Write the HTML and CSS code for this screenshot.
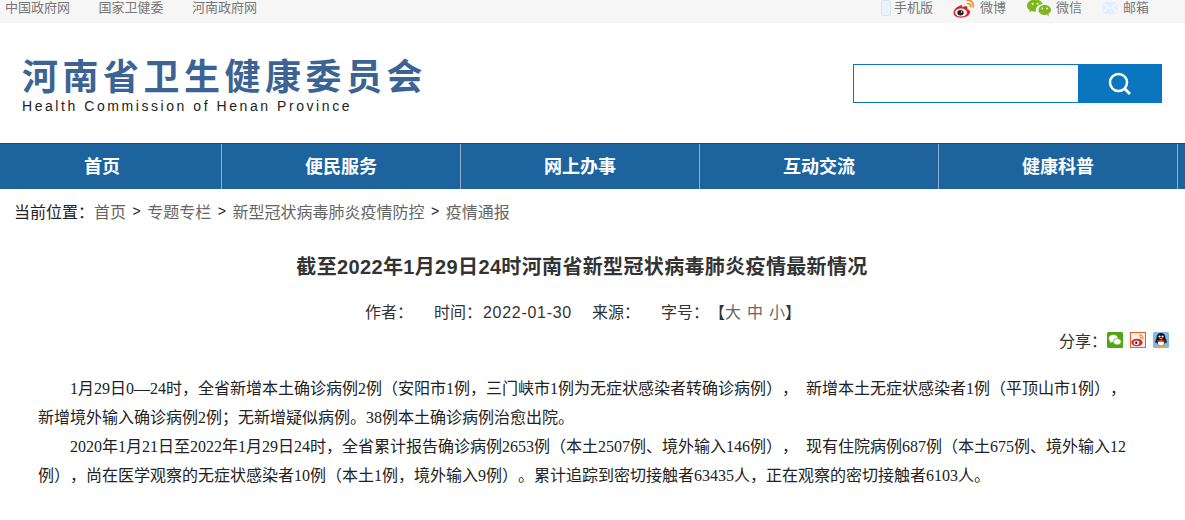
FILE: index.html
```html
<!DOCTYPE html>
<html>
<head>
    <meta charset="utf-8">
    <link rel="stylesheet" href="styles.css">
</head>
<body>
    <div class="top-bar">
        <div class="top-links">
            <a>中国政府网</a>
            <a>国家卫健委</a>
            <a>河南政府网</a>
        </div>
        <div class="top-tools">
            <a class="tool tool-phone">
                <svg width="10" height="16" viewBox="0 0 10 16"><rect x="0.5" y="0.5" width="9" height="15" rx="1.5" fill="#eaf3fc" stroke="#d5e6f7"/></svg>
                手机版
            </a>
            <a class="tool tool-weibo">
                <svg width="22" height="19" viewBox="0 0 22 19">
                    <path d="M9 6C4.500 7 .2 10.500 .5 14c.3 3.200 4.200 5 8.700 4.600 4.800-.4 8.300-3.200 7.900-6-.2-1.400-1.600-2.100-2.900-2.400.7-1.700.3-2.800-1-3-1.300-.2-3 .3-4 1.100.2-1.600-.2-2.700-1.200-2.300z" fill="#d9232a"/>
                    <ellipse cx="8" cy="13.500" rx="6" ry="4" fill="#fff"/>
                    <ellipse cx="7.500" cy="13.800" rx="3.200" ry="2.700" fill="#222"/>
                    <circle cx="8.500" cy="13" r=".8" fill="#fff"/>
                    <path d="M14 1.200c3.700-.6 7.100 2.500 6 6.800M14.500 4.500c1.900-.3 3.500 1.200 3 3.100" fill="none" stroke="#f08a1d" stroke-width="1.600" stroke-linecap="round"/>
                </svg>
                微博
            </a>
            <a class="tool tool-wechat">
                <svg width="24" height="18" viewBox="0 0 25 18">
                    <path d="M8.500 0C3.800 0 0 2.900 0 6.400c0 2 1.200 3.700 3 4.900L2.400 13.500l2.500-1.300c1.100.4 2.300.6 3.600.6.400 0 .7 0 1-.1-.2-.6-.3-1.200-.3-1.800 0-3.300 3.200-5.900 7.100-5.900C15.300 2.100 12.200 0 8.500 0z" fill="#7cb81c"/>
                    <path d="M25 11c0-2.900-2.800-5.200-6.500-5.200S12 8.100 12 11s2.800 5.200 6.500 5.200c.8 0 1.500-.1 2.200-.3L22.800 18l-.5-2.900C24 14 25 12.600 25 11z" fill="#7cb81c"/>
                    <circle cx="5.800" cy="4.500" r="1" fill="#fff"/>
                    <circle cx="11" cy="4.500" r="1" fill="#fff"/>
                    <circle cx="16" cy="9.500" r=".9" fill="#fff"/>
                    <circle cx="21" cy="9.500" r=".9" fill="#fff"/>
                </svg>
                微信
            </a>
            <a class="tool tool-mail">
                <svg width="16" height="12" viewBox="0 0 16 12"><rect width="16" height="12" fill="#e3effa"/><path d="M0 .5l8 6 8-6M0 11.500l5.500-6M16 11.500l-5.500-6" fill="none" stroke="#fff"/></svg>
                邮箱
            </a>
        </div>
    </div>

    <div class="header">
        <div class="logo">
            <div class="logo-cn">河南省卫生健康委员会</div>
            <div class="logo-en">Health Commission of Henan Province</div>
        </div>
        <form class="search">
            <input type="text" class="search-input">
            <button type="button" class="search-button">
                <svg width="24" height="24" viewBox="0 0 24 24"><circle cx="10.500" cy="10.500" r="8.500" fill="none" stroke="#fff" stroke-width="2.500"/><path d="M16.500 16.500l5.500 5.500" stroke="#fff" stroke-width="3"/></svg>
            </button>
        </form>
    </div>

    <div class="nav">
        <a>首页</a>
        <a>便民服务</a>
        <a>网上办事</a>
        <a>互动交流</a>
        <a>健康科普</a>
    </div>

    <div class="breadcrumb">
        <span class="crumb-label">当前位置：</span>
        <a>首页</a><span class="crumb-sep">&gt;</span>
        <a>专题专栏</a><span class="crumb-sep">&gt;</span>
        <a>新型冠状病毒肺炎疫情防控</a><span class="crumb-sep">&gt;</span>
        <a>疫情通报</a>
    </div>

    <div class="article">
        <h1 class="article-title">截至2022年1月29日24时河南省新型冠状病毒肺炎疫情最新情况</h1>
        <div class="article-meta">
            <span class="meta-author">作者：</span>
            <span class="meta-time">时间：<span class="meta-date">2022-01-30</span></span>
            <span class="meta-source">来源：</span>
            <span class="meta-size">字号：【<a>大</a> <a>中</a> <a>小</a>】</span>
        </div>
        <div class="share">
            <span class="share-label">分享：</span>
            <div class="share-icons">
                <svg width="16" height="16" viewBox="0 0 16 16">
                    <rect width="16" height="16" rx="1.500" fill="#4ea50f"/>
                    <ellipse cx="6.300" cy="6.500" rx="4.600" ry="3.800" fill="#fff"/>
                    <path d="M3.500 9l-.5 2 2.500-1.200z" fill="#fff"/>
                    <ellipse cx="10.300" cy="9.700" rx="3.900" ry="3.200" fill="#fff" stroke="#4ea50f" stroke-width=".7"/>
                </svg>
                <svg width="16" height="16" viewBox="0 0 16 16">
                    <rect x=".5" y=".5" width="15" height="15" fill="#fbeee6" stroke="#e2622a"/>
                    <ellipse cx="7" cy="10.500" rx="5.500" ry="3.800" fill="#d9232a"/>
                    <ellipse cx="6.500" cy="10.700" rx="2.800" ry="2.200" fill="#fff"/>
                    <circle cx="6.300" cy="10.800" r="1.200" fill="#222"/>
                    <path d="M9 3c2.800-.3 4.500 1.900 4 4.500M9.500 5.200c1.300-.1 2 .9 1.700 2" fill="none" stroke="#f08a1d" stroke-width="1.200"/>
                </svg>
                <svg width="16" height="16" viewBox="0 0 16 16">
                    <rect width="16" height="16" rx="1.500" fill="#7db9ea"/>
                    <path d="M8 1C5 1 3.600 3.200 3.600 6.200 2.500 8 1.800 10 2.600 11.200l1.400-1C4.500 12.300 6 14 8 14s3.500-1.700 4-3.800l1.400 1c.8-1.200.1-3.200-1-5C12.400 3.200 11 1 8 1z" fill="#111"/>
                    <ellipse cx="8" cy="11" rx="3" ry="2.800" fill="#fff"/>
                    <circle cx="6.500" cy="4.500" r="1.100" fill="#fff"/>
                    <circle cx="9.500" cy="4.500" r="1.100" fill="#fff"/>
                    <path d="M5.800 6h4.400L8 7.600z" fill="#f2a81d"/>
                    <path d="M4 8.200h8l-.3 1.600H4.300z" fill="#d9232a"/>
                    <path d="M3.800 14.700h3.700M8.500 14.700h3.700" stroke="#f2a81d" stroke-width="1.800"/>
                </svg>
            </div>
        </div>
        <div class="article-body">
            <p>1月29日0—24时，全省新增本土确诊病例2例（安阳市1例，三门峡市1例为无症状感染者转确诊病例），&nbsp;&nbsp;新增本土无症状感染者1例（平顶山市1例），新增境外输入确诊病例2例；无新增疑似病例。38例本土确诊病例治愈出院。</p>
            <p>2020年1月21日至2022年1月29日24时，全省累计报告确诊病例2653例（本土2507例、境外输入146例），&nbsp;&nbsp;现有住院病例687例（本土675例、境外输入12例），尚在医学观察的无症状感染者10例（本土1例，境外输入9例）。累计追踪到密切接触者63435人，正在观察的密切接触者6103人。</p>
        </div>
    </div>
</body>
</html>
```

FILE: styles.css
```css
* {
    box-sizing: border-box;
}

body {
    margin: 0;
    background-color: #fff;
    color: #333;
    font-family: "Liberation Sans", "Noto Sans CJK SC", sans-serif;
    font-size: 14px;
    overflow-x: hidden;
}

/* Top bar */
.top-bar {
    display: flex;
    justify-content: space-between;
    height: 23px;
    padding: 0 6px 0 5px;
    background-color: #f6f6f6;
    color: #777;
    font-size: 13px;
    line-height: 16px;
}

.top-links {
    display: flex;
    gap: 28.500px;
}

.top-tools {
    display: flex;
    height: 16px;
}

.tool {
    display: flex;
    align-items: center;
    gap: 3px;
}

.tool-phone {
    margin-right: 20px;
}

.tool-weibo {
    margin-right: 21px;
    gap: 5px;
}

.tool-wechat {
    margin-right: 20px;
    gap: 5px;
}

.tool-mail {
    margin-right: 30px;
    gap: 5px;
}

/* Header */
.header {
    display: flex;
    justify-content: space-between;
    height: 120px;
    padding: 35px 23px 0 22px;
}

.logo-cn {
    color: #3b6494;
    font-size: 36px;
    font-weight: bold;
    line-height: 40px;
    letter-spacing: 4.500px;
    white-space: nowrap;
}

.logo-en {
    color: #222;
    font-size: 14px;
    line-height: 16px;
    letter-spacing: 2.560px;
}

.search {
    display: flex;
    width: 309px;
    height: 39px;
    margin-top: 6px;
}

.search-input {
    flex: 1;
    border: 1px solid #0b76c0;
    border-right: none;
    outline: none;
}

.search-button {
    display: flex;
    align-items: center;
    justify-content: center;
    width: 84px;
    border: none;
    background-color: #0b76c0;
    padding: 0;
}

/* Nav */
.nav {
    display: flex;
    width: 1213px;
    height: 46px;
    margin-left: -17px;
    border-top: 1px solid #0f4f88;
    background-color: #1d649f;
}

.nav a {
    width: 239px;
    flex-shrink: 0;
    border-right: 1px solid #8fb0cf;
    color: #fff;
    font-size: 18px;
    font-weight: bold;
    line-height: 46px;
    text-align: center;
}

/* Breadcrumb */
.breadcrumb {
    display: flex;
    align-items: center;
    height: 44px;
    padding-left: 14px;
    color: #666;
    font-size: 16px;
}

.crumb-label {
    color: #222;
}

.crumb-sep {
    margin: 0 6.500px;
    color: #222;
    font-size: 14px;
}

/* Article */
.article-title {
    margin: 20px 21px 0 0;
    color: #333;
    font-size: 20px;
    font-weight: bold;
    line-height: 28px;
    letter-spacing: 0.350px;
    text-align: center;
}

.article-meta {
    display: flex;
    margin-top: 20px;
    padding-left: 365px;
    color: #333;
    font-size: 16px;
    line-height: 24px;
    text-spacing-trim: space-all;
}

.meta-author {
    width: 69px;
}

.meta-time {
    width: 158px;
}

.meta-date {
    margin-left: 1px;
    letter-spacing: 0.700px;
}

.meta-source {
    width: 69px;
}

.meta-size {
    word-spacing: 1.500px;
}

.meta-size a {
    color: #666;
}

.share {
    display: flex;
    align-items: center;
    justify-content: flex-end;
    height: 20px;
    margin-top: 5px;
    padding-right: 16px;
    font-size: 16px;
}

.share-icons {
    display: flex;
    gap: 7px;
}

.article-body {
    margin-top: 24px;
    padding: 0 55px 0 38px;
    color: #222;
    font-family: "Liberation Serif", "Noto Sans CJK SC", sans-serif;
    font-size: 16px;
    line-height: 29px;
    text-spacing-trim: space-all;
}

.article-body p {
    margin: 0;
    text-indent: 32px;
}
```
